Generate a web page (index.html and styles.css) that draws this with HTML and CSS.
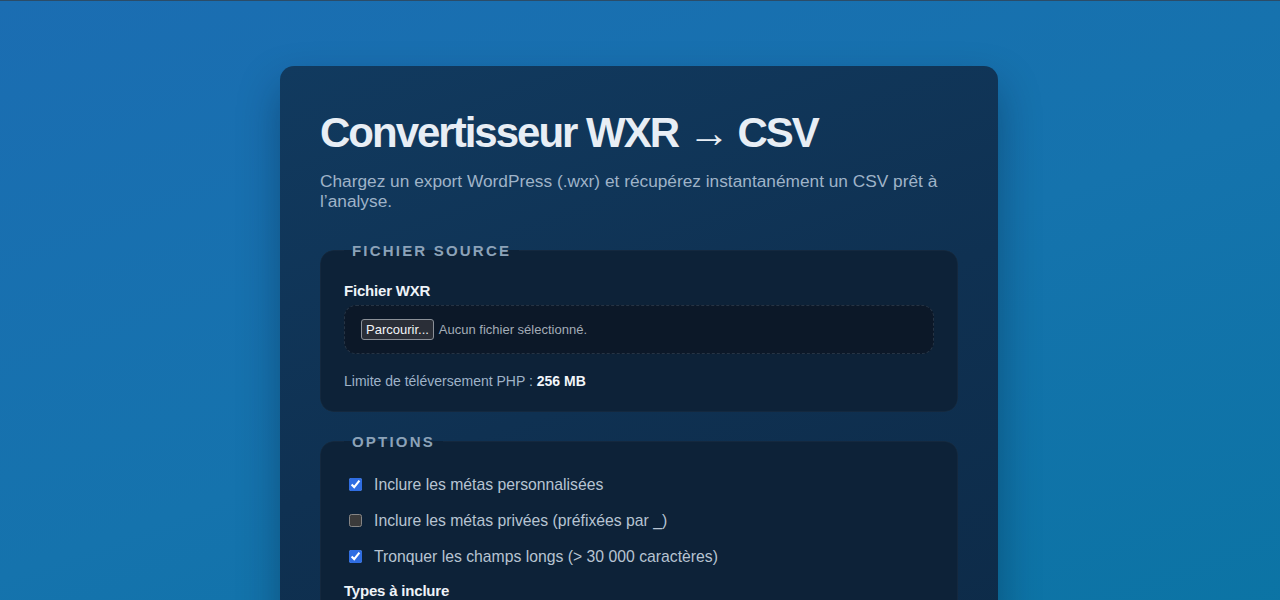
FILE: index.html
```html
<!DOCTYPE html>
<html lang="fr">
<head>
<meta charset="utf-8">
<title>Convertisseur WXR → CSV</title>
<link rel="stylesheet" href="styles.css">
</head>
<body>
<main class="page">
  <section class="card">
    <h1 class="title">Convertisseur WXR → CSV</h1>
    <p class="subtitle">Chargez un export WordPress (.wxr) et récupérez instantanément un CSV prêt à l’analyse.</p>

    <fieldset class="group">
      <legend class="group-legend">Fichier source</legend>
      <label class="field-label">Fichier WXR</label>
      <div class="file-drop">
        <span class="file-button">Parcourir...</span>
        <span class="file-name">Aucun fichier sélectionné.</span>
      </div>
      <p class="hint">Limite de téléversement PHP : <strong>256 MB</strong></p>
    </fieldset>

    <fieldset class="group">
      <legend class="group-legend">Options</legend>
      <div class="checks">
        <label class="check"><input type="checkbox" checked> <span>Inclure les métas personnalisées</span></label>
        <label class="check"><input type="checkbox"> <span>Inclure les métas privées (préfixées par _)</span></label>
        <label class="check"><input type="checkbox" checked> <span>Tronquer les champs longs (&gt; 30 000 caractères)</span></label>
      </div>
      <div class="field-label types">Types à inclure</div>
    </fieldset>
  </section>
</main>
</body>
</html>
```
FILE: styles.css
```css
html, body {
  margin: 0;
  padding: 0;
}
body {
  font-family: "Liberation Sans", Arial, sans-serif;
  color: #e6edf5;
  min-height: 100vh;
  background: linear-gradient(160deg, #1b6db2 0%, #1573ad 50%, #0a74a3 100%);
  border-top: 1px solid #2b4c68;
  box-sizing: border-box;
}
.page {
  display: flex;
  justify-content: center;
  padding-top: 65px;
  padding-right: 2px;
}
.card {
  width: 718px;
  box-sizing: border-box;
  padding: 42px 40px 40px;
  border-radius: 14px;
  background: linear-gradient(160deg, #113a5f 0%, #0f3152 50%, #0d2a47 100%);
  box-shadow: 0 20px 40px rgba(5, 20, 40, 0.35);
}
.title {
  margin: 0;
  font-size: 42px;
  line-height: 1.2;
  font-weight: 700;
  letter-spacing: -2px;
  color: #e8eef5;
}
.subtitle {
  margin: 13px 0 31px;
  font-size: 17.3px;
  line-height: 20px;
  color: #9fb3c8;
}
.group {
  margin: 0 0 21px;
  padding: 23px 23px 21px;
  border: 1px solid rgba(255, 255, 255, 0.03);
  border-radius: 14px;
  background: #0d2238;
  color-scheme: dark;
}
.group-legend {
  padding: 0 8px;
  margin-left: 0;
  font-size: 15px;
  font-weight: 700;
  letter-spacing: 2.2px;
  text-transform: uppercase;
  color: #8ca2b8;
}
.field-label {
  display: block;
  font-size: 15px;
  font-weight: 700;
  line-height: 18px;
  letter-spacing: -0.2px;
  color: #eef3f8;
  margin-bottom: 5px;
}
.file-drop {
  display: flex;
  align-items: center;
  gap: 5px;
  height: 49px;
  box-sizing: border-box;
  padding: 0 16px;
  border: 1px dashed rgba(160, 180, 200, 0.18);
  border-radius: 12px;
  background: #0c1828;
}
.file-button {
  font-size: 13px;
  line-height: 19px;
  padding: 0 4px;
  color: #f2f4f7;
  background: #2a2e37;
  border: 1px solid #8b9098;
  border-radius: 3px;
}
.file-name {
  font-size: 13px;
  color: #a3acb7;
}
.hint {
  margin: 18px 0 0;
  font-size: 14px;
  line-height: 18px;
  color: #9fb3c8;
}
.hint strong {
  color: #f2f6fa;
}
.checks {
  display: flex;
  flex-direction: column;
  gap: 15px;
  padding-top: 1px;
}
.check {
  display: flex;
  align-items: center;
  font-size: 15.75px;
  line-height: 21px;
  color: #b7c4d2;
}
.check input {
  margin: 0 12px 0 5px;
  width: 13px;
  height: 13px;
  accent-color: #2f6de2;
}
.types {
  margin-top: 15px;
}
```
